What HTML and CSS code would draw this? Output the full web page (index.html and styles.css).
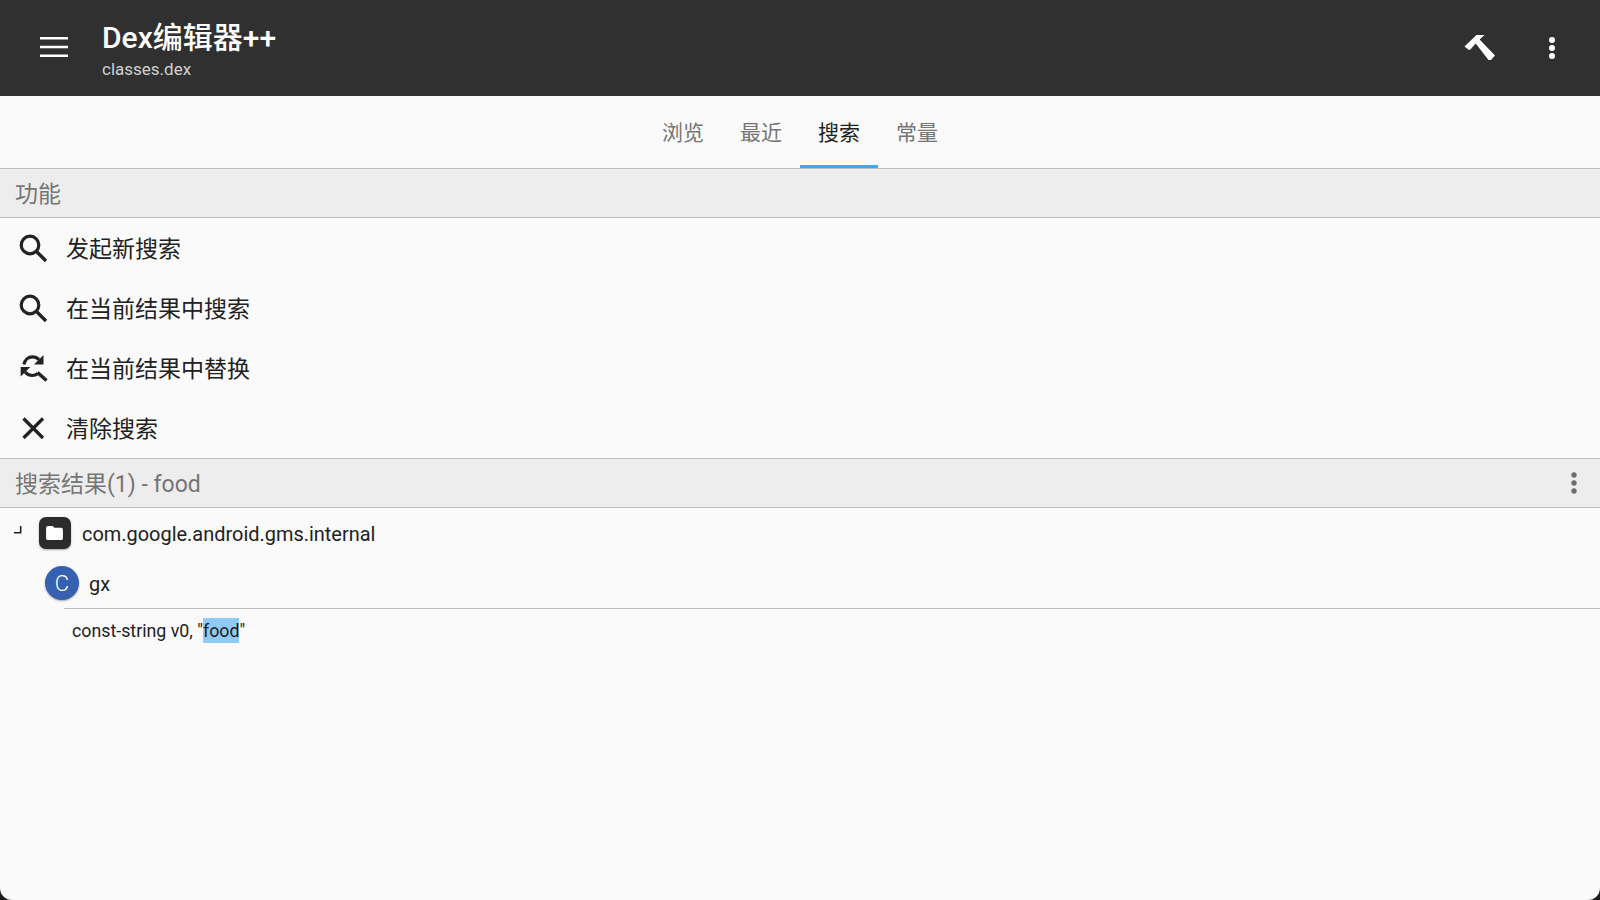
FILE: index.html
```html
<!DOCTYPE html>
<html lang="zh">
<head>
<meta charset="utf-8">
<title>Dex编辑器++</title>
<link rel="stylesheet" href="styles.css">
</head>
<body>
<div class="app">
  <header class="toolbar">
    <svg class="menu-icon" viewBox="0 0 28 20" width="28" height="20"><path fill="#fff" d="M0 0h28v2.600H0zM0 8.700h28v2.600H0zM0 17.400h28V20H0z"/></svg>
    <div class="titles">
      <div class="title">Dex编辑器++</div>
      <div class="subtitle">classes.dex</div>
    </div>
    <svg class="hammer" viewBox="0 0 32 28" width="32" height="28"><path fill="#fff" d="M.5 12.500 12.500 1 H20.500 L15.600 5.600 31 21.500 27 26 24.500 26 11.700 9.600 6.200 15.800 4.600 15.800Z"/></svg>
    <svg class="dots" viewBox="0 0 6 22" width="6" height="22"><circle cx="3" cy="3" r="3" fill="#fff"/><circle cx="3" cy="11" r="3" fill="#fff"/><circle cx="3" cy="19" r="3" fill="#fff"/></svg>
  </header>
  <nav class="tabs">
    <div class="tab">浏览</div>
    <div class="tab">最近</div>
    <div class="tab active">搜索</div>
    <div class="tab">常量</div>
  </nav>
  <div class="section"><span>功能</span></div>
  <div class="item">
    <svg class="ico" viewBox="0 0 30 30" width="30" height="30"><circle cx="12" cy="12" r="8.800" fill="none" stroke="#222" stroke-width="3.200"/><path d="M18.500 18.500 28 28" stroke="#222" stroke-width="3.400" fill="none"/></svg>
    <span>发起新搜索</span>
  </div>
  <div class="item">
    <svg class="ico" viewBox="0 0 30 30" width="30" height="30"><circle cx="12" cy="12" r="8.800" fill="none" stroke="#222" stroke-width="3.200"/><path d="M18.500 18.500 28 28" stroke="#222" stroke-width="3.400" fill="none"/></svg>
    <span>在当前结果中搜索</span>
  </div>
  <div class="item">
    <svg class="ico" viewBox="0 0 30 30" width="30" height="30"><path d="M6 11.500C6.800 6.800 10.200 3.800 14.500 3.800c2.500 0 4.700 1 6.400 2.800" fill="none" stroke="#222" stroke-width="3.200"/><path d="M25.500 2v9.500H16z" fill="#222"/><path d="M19.800 20.500c-1.600 1.300-3.500 2-5.500 2-3.100 0-5.500-1.300-7.200-3.500" fill="none" stroke="#222" stroke-width="3.200"/><path d="M2.700 14h9.600l-9.600 9.600z" fill="#222"/><path d="M19.500 19.500 28.500 27.500" stroke="#222" stroke-width="3.400" fill="none"/></svg>
    <span>在当前结果中替换</span>
  </div>
  <div class="item">
    <svg class="ico" viewBox="0 0 30 30" width="30" height="30"><path d="M5.500 5.500 25 25M25 5.500 5.500 25" stroke="#222" stroke-width="3.300" fill="none"/></svg>
    <span>清除搜索</span>
  </div>
  <div class="section results"><span>搜索结果(1) - food</span>
    <svg class="sec-dots" viewBox="0 0 6 22" width="6" height="22"><circle cx="3" cy="3" r="2.700" fill="#6e6e6e"/><circle cx="3" cy="11" r="2.700" fill="#6e6e6e"/><circle cx="3" cy="19" r="2.700" fill="#6e6e6e"/></svg>
  </div>
  <div class="pkg">
    <svg class="expander" viewBox="0 0 8 8" width="8" height="8"><path d="M0 6.700h6.700V0" fill="none" stroke="#222" stroke-width="1.600"/></svg>
    <div class="pkg-icon">
      <svg class="folder" viewBox="0 0 18 15" width="17" height="14"><path fill="#fff" d="M2 0h5l2 2h7a2 2 0 0 1 2 2v9a2 2 0 0 1-2 2H2a2 2 0 0 1-2-2V2a2 2 0 0 1 2-2z"/></svg>
    </div>
    <span class="pkg-name">com.google.android.gms.internal</span>
  </div>
  <div class="cls">
    <div class="cls-icon">C</div>
    <span class="cls-name">gx</span>
  </div>
  <div class="match">
    <div class="code">const-string v0, "<mark>food</mark>"</div>
  </div>
</div>
</body>
</html>
```
FILE: styles.css
```css
* { box-sizing: border-box; }
html, body { margin: 0; height: 100%; }
body {
  background: #1c1c1e;
  font-family: Roboto, "Noto Sans CJK SC", sans-serif;
  overflow: hidden;
}
.app {
  width: 1600px;
  height: 900px;
  background: #fafafa;
  border-radius: 0 0 12px 12px;
  overflow: hidden;
}
.toolbar {
  height: 96px;
  background: #303030;
  display: flex;
  align-items: center;
  color: #fff;
}
.menu-icon { margin-left: 40px; margin-top: -2px; }
.titles { margin-left: 34px; flex: 1; }
.title { font-size: 30px; font-weight: 500; line-height: 38px; margin-top: 4px; }
.subtitle { font-size: 17px; line-height: 24px; color: #d0d0d0; margin-top: 0; }
.hammer { margin-right: 53px; }
.dots { margin-right: 45px; }
.tabs {
  height: 73px;
  display: flex;
  justify-content: center;
  border-bottom: 1px solid #bdbdbd;
}
.tab {
  width: 78px;
  text-align: center;
  font-size: 21px;
  line-height: 74px;
  color: #757575;
  height: 72px;
}
.tab.active { color: #212121; border-bottom: 3px solid #42a5f5; }
.section {
  height: 49px;
  background: #ededed;
  border-bottom: 1px solid #bdbdbd;
  display: flex;
  align-items: center;
  justify-content: space-between;
  padding: 0 23px 2px 15px;
  font-size: 23px;
  color: #757575;
}
.item {
  height: 60px;
  display: flex;
  align-items: center;
  padding-left: 18px;
  font-size: 23px;
  color: #212121;
}
.item span { margin-left: 18px; margin-top: -2px; }
.results { border-top: 1px solid #bdbdbd; height: 50px; }
.sec-dots { margin-top: 2px; }
.pkg {
  height: 50px;
  display: flex;
  align-items: center;
  font-size: 19.950px;
  color: #212121;
  padding-left: 15px;
}
.pkg-name { margin-top: 2px; margin-left: 1px; }
.expander { margin-top: -6px; margin-left: -1px; margin-right: 1px; }
.pkg-icon {
  width: 32px;
  height: 32px;
  margin-left: 16px;
  margin-right: 10px;
  border-radius: 7px;
  background: #2c2c2c;
  box-shadow: 0 1px 2px rgba(0,0,0,.35);
  display: flex;
  align-items: center;
  justify-content: center;
}
.folder { margin-left: -1px; margin-top: -1px; }
.cls {
  height: 50px;
  display: flex;
  align-items: center;
  font-size: 19.950px;
  color: #212121;
  padding-left: 45px;
}
.cls-name { margin-top: 2px; }
.cls-icon {
  width: 34px;
  height: 34px;
  border-radius: 50%;
  background: #3660b0;
  color: #fff;
  text-align: center;
  line-height: 35px;
  font-size: 22px;
  font-weight: 300;
  box-shadow: 0 1px 2px rgba(0,0,0,.35);
  margin-right: 10px;
}
.match {
  margin-left: 64px;
  border-top: 1px solid #bdbdbd;
  padding: 9px 0 0 8px;
}
.code { font-size: 17.800px; line-height: 25px; color: #212121; }
mark { background: #90caf9; color: inherit; display: inline-block; line-height: 25px; }
```
